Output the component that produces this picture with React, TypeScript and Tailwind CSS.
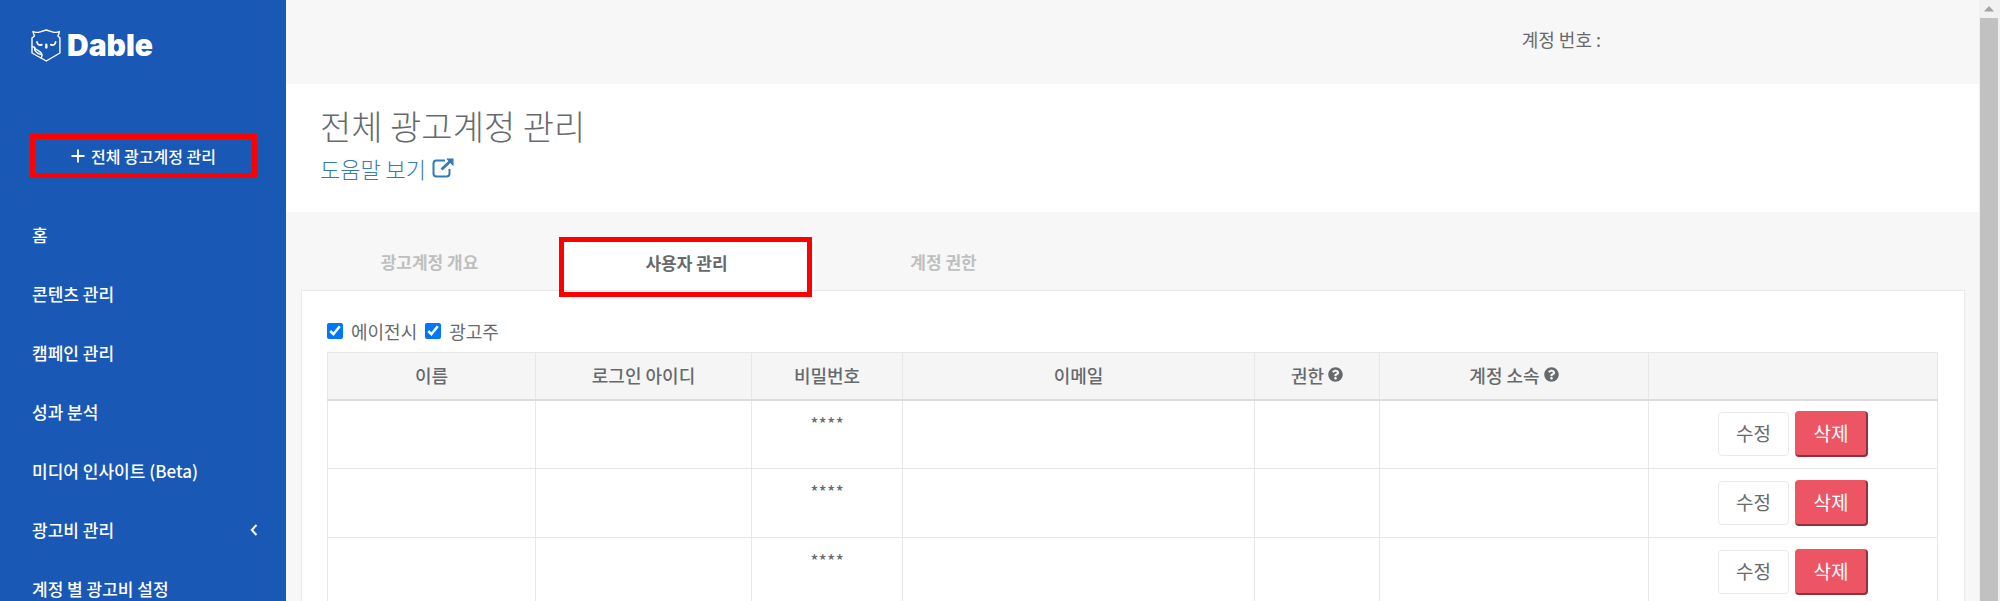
import { useState } from 'react'
import { FaQuestionCircle } from 'react-icons/fa'

const MENU: { label: string; hasChildren?: boolean }[] = [
  { label: '홈' },
  { label: '콘텐츠 관리' },
  { label: '캠페인 관리' },
  { label: '성과 분석' },
  { label: '미디어 인사이트 (Beta)' },
  { label: '광고비 관리', hasChildren: true },
  { label: '계정 별 광고비 설정' },
]

const TABS = ['광고계정 개요', '사용자 관리', '계정 권한']

const COLUMNS: { label: string; width: string; help?: boolean }[] = [
  { label: '이름',         width: 'w-[208px]' },
  { label: '로그인 아이디', width: 'w-[216px]' },
  { label: '비밀번호',     width: 'w-[151px]' },
  { label: '이메일',       width: 'w-[352px]' },
  { label: '권한',         width: 'w-[125px]', help: true },
  { label: '계정 소속',    width: 'w-[269px]', help: true },
  { label: '',             width: 'w-[289px]' },
]

const USERS = [
  { id: 1, password: '****' },
  { id: 2, password: '****' },
  { id: 3, password: '****' },
]

function OwlLogo() {
  return (
    <svg className="h-[33px] w-[30px]" viewBox="0 0 30 33" fill="none" stroke="currentColor" strokeWidth="1.400" strokeLinecap="round" strokeLinejoin="round" aria-hidden="true">
      <path d="M3.500 7C2.800 5.500 2.200 4 2 2.500c2.200 1.200 4.800 1 7.200.3L15.200 1l6 1.800c2.400.7 5 .9 7.200-.3-.2 1.500-.8 3-1.500 4.500l2 2v15L15.300 32 1 24V9z" />
      <path d="M1.200 17.500l2.300.8c.6 2.600 6.700 3.800 7.500 7 .3 1.400-.1 2.600-.9 3.500" />
      <path d="M3.500 18.300c-.3 3.500 2.500 6.200 6.600 7.200" />
      <path d="M6 13c.2 2.600 2.600 3.700 4.800 2.600M24.600 13c-.2 2.600-2.600 3.700-4.800 2.600" strokeWidth="1.800" />
      <path d="M15.300 15.800v2.600" strokeWidth="2.400" />
    </svg>
  )
}

function ExternalIcon() {
  return (
    <svg className="size-[22px]" viewBox="0 0 22 22" fill="none" stroke="currentColor" aria-hidden="true">
      <path d="M13 3.500H4.500a3 3 0 0 0-3 3v10a3 3 0 0 0 3 3h10a3 3 0 0 0 3-3V12" strokeWidth="2" />
      <path d="M9.500 12.500L18.500 4" strokeWidth="2.800" />
      <path d="M14 1.500h7.500v8z" fill="currentColor" stroke="none" />
    </svg>
  )
}

function Sidebar() {
  return (
    <aside className="w-[286px] shrink-0 bg-[#1a58b5] text-white">
      <a href="#" className="flex h-[90px] items-center gap-1.5 pl-[31px]">
        <OwlLogo />
        <span className="font-[Inter] text-[30px] font-black leading-none">Dable</span>
      </a>

      <div className="mt-11 pl-[30px]">
        <button
          type="button"
          className="flex h-11 w-[227px] items-center justify-center gap-1.5 border-5 border-[#fe0000] text-base font-medium"
        >
          <svg className="size-3.5" viewBox="0 0 14 14" stroke="currentColor" strokeWidth="1.8" aria-hidden="true">
            <path d="M7 0.500v13M.5 7h13" />
          </svg>
          전체 광고계정 관리
        </button>
      </div>

      <nav className="mt-[27px]">
        {MENU.map((item) => (
          <a
            key={item.label}
            href="#"
            className="flex h-[59px] items-center justify-between pl-8 pr-7 text-[17px] font-medium"
          >
            {item.label}
            {item.hasChildren && (
              <svg className="h-3 w-2" viewBox="0 0 8 12" fill="none" stroke="currentColor" strokeWidth="2" aria-hidden="true">
                <path d="M6.500 1L1.800 6l4.700 5" />
              </svg>
            )}
          </a>
        ))}
      </nav>
    </aside>
  )
}

function UserTable() {
  return (
    <table className="w-full table-fixed border-collapse text-center text-lg">
      <thead>
        <tr className="h-[47px] border-b-2 border-[#dcdcdc] bg-[#f5f5f6]">
          {COLUMNS.map((col) => (
            <th key={col.label} className={`${col.width} border-x border-t border-[#e7e7e7] pb-0.5 font-medium`}>
              <span className="inline-flex items-center gap-1">
                {col.label}
                {col.help && <FaQuestionCircle className="size-[15px]" />}
              </span>
            </th>
          ))}
        </tr>
      </thead>
      <tbody>
        {USERS.map((user) => (
          <tr key={user.id} className="h-[69px]">
            <td className="border border-[#e7e7e7]" />
            <td className="border border-[#e7e7e7]" />
            <td className="border border-[#e7e7e7] pt-2 align-top leading-7">{user.password}</td>
            <td className="border border-[#e7e7e7]" />
            <td className="border border-[#e7e7e7]" />
            <td className="border border-[#e7e7e7]" />
            <td className="border border-[#e7e7e7]">
              <div className="flex items-center justify-center gap-1.5">
                <button type="button" className="h-11 w-[71px] rounded border border-[#e7eaec] bg-white pb-0.5 text-[19px]">
                  수정
                </button>
                <button
                  type="button"
                  className="h-[46px] w-[73px] rounded border border-r-2 border-b-2 border-[#ed5565] border-r-[#8e333d] border-b-[#8e333d] bg-[#ed5565] pb-0.5 text-[19px] text-white"
                >
                  삭제
                </button>
              </div>
            </td>
          </tr>
        ))}
      </tbody>
    </table>
  )
}

export default function App() {
  const [activeTab, setActiveTab] = useState('사용자 관리')

  return (
    <div className="flex h-screen overflow-hidden bg-[#f7f7f7] font-['Noto_Sans_CJK_KR',sans-serif] text-[#676a6c]">
      <Sidebar />

      <main className="flex min-w-0 flex-1 flex-col">
        <header className="flex h-[84px] shrink-0 items-center justify-end pr-[378px] pb-1.5 text-lg">
          계정 번호 :
        </header>

        <div className="h-32 shrink-0 bg-white px-[34px] pt-5">
          <h1 className="text-[34px] font-light leading-[44px]">전체 광고계정 관리</h1>
          <a href="#" className="inline-flex items-center gap-1.5 text-[22px] font-light leading-10 text-[#337ab7]">
            도움말 보기
            <ExternalIcon />
          </a>
        </div>

        <div className="flex flex-1 flex-col pl-[15px] pr-3.5 pt-[26px]">
          <div role="tablist" className="flex">
            {TABS.map((tab) => {
              const selected = tab === activeTab
              return (
                <button
                  key={tab}
                  type="button"
                  role="tab"
                  aria-selected={selected}
                  onClick={() => setActiveTab(tab)}
                  className={`relative h-[52px] w-[257px] text-[17px] font-bold ${selected ? 'bg-white pb-0.5' : 'pb-1 text-[#bfbfbf]'}`}
                >
                  {tab}
                  {selected && <span className="absolute -top-px left-px h-[60px] w-[253px] border-5 border-[#fe0000]" />}
                </button>
              )
            })}
          </div>

          <section className="flex-1 border border-[#e7eaec] bg-white pl-[25px] pr-[27px] pt-[26px]">
            <div className="mb-[7px] flex h-7 items-center gap-2 text-lg">
              <label className="flex items-center gap-2">
                <input type="checkbox" defaultChecked className="size-4" />
                에이전시
              </label>
              <label className="flex items-center gap-2">
                <input type="checkbox" defaultChecked className="size-4" />
                광고주
              </label>
            </div>
            <UserTable />
          </section>
        </div>
      </main>

      {/* 스크롤바 */}
      <div className="flex w-[21px] shrink-0 flex-col bg-[#f1f1f1] pl-px">
        <svg className="h-[18px] w-[18px] text-[#a3a3a3]" viewBox="0 0 18 18" fill="currentColor" aria-hidden="true">
          <path d="M4 11.500L9 6l5 5.500z" />
        </svg>
        <div className="w-[18px] flex-1 bg-[#c1c1c1]" />
      </div>
    </div>
  )
}
